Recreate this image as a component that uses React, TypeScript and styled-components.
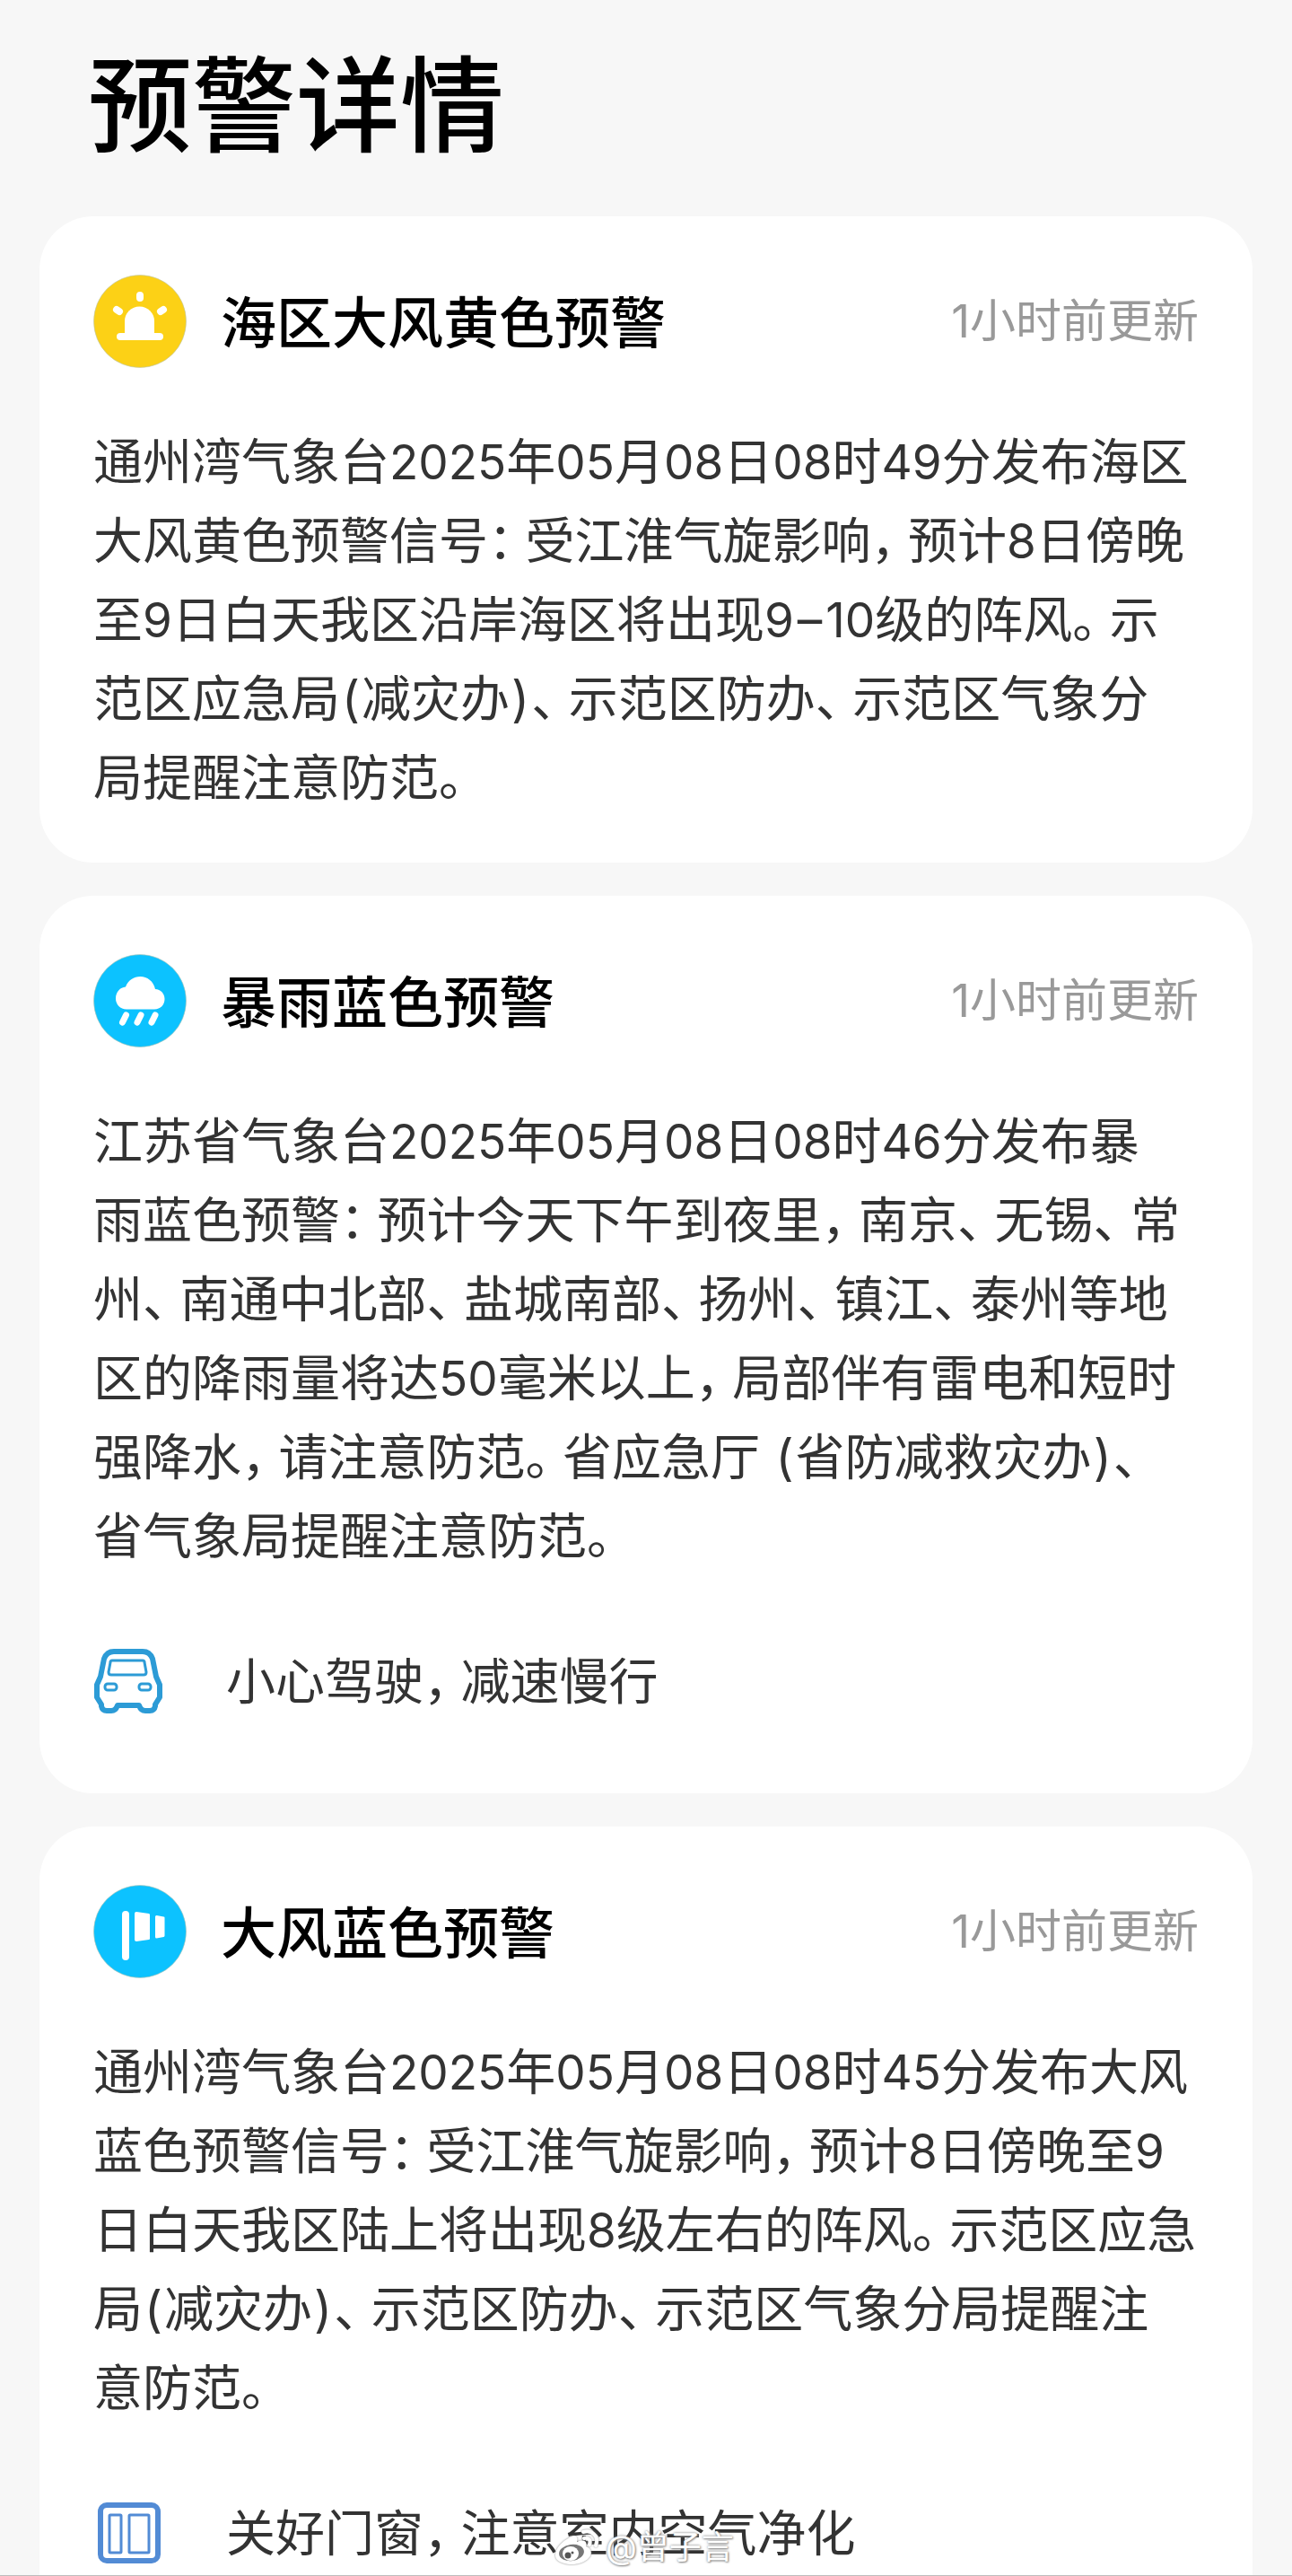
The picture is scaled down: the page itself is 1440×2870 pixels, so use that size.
import React from "react";
import styled, { createGlobalStyle } from "styled-components";

const GlobalStyle = createGlobalStyle`
  * { box-sizing: border-box; }
  body {
    margin: 0;
    background: #f7f7f7;
    font-family: Inter, "Noto Sans CJK SC", sans-serif;
    color: #333333;
  }
  h1, h2, p { margin: 0; }
`;

const Page = styled.main`
  position: relative;
  height: 100vh;
  overflow: hidden;
  padding: 0 44px;
  border-bottom: 1px solid #bdbdbd;
`;

const PageTitle = styled.h1`
  padding: 38px 54px 43px;
  font-size: 116px;
  line-height: 160px;
  font-weight: 500;
  color: #000000;
`;

const CardList = styled.div`
  display: flex;
  flex-direction: column;
  gap: 37px;
`;

const Card = styled.article`
  padding: 65px 60px 51px;
  border-radius: 60px;
  background: #ffffff;
`;

const CardHeader = styled.header`
  display: flex;
  align-items: center;
  gap: 38px;
  height: 104px;
  margin-bottom: 60px;
`;

const CardTitle = styled.h2`
  flex: 1;
  padding-top: 6px;
  font-size: 62px;
  line-height: 88px;
  font-weight: 500;
  color: #000000;
`;

const Updated = styled.time`
  font-size: 51px;
  line-height: 72px;
  color: #999999;
`;

const Body = styled.p`
  font-size: 55px;
  line-height: 88px;
  white-space: pre-line;
`;

const Mark = styled.span`
  margin-right: 14px;
  font-feature-settings: "halt";
`;

const Paren = styled.span`
  margin: 0 2px;
`;

const Dash = styled.span`
  margin: 0 4px;
`;

const Num = styled.span`
  font-size: 53px;
  line-height: 1;
`;

const Tip = styled.div`
  display: flex;
  align-items: center;
  gap: 68px;
  margin: 74px 0 30px;
  font-size: 55px;
  line-height: 88px;
`;

const Watermark = styled.div`
  position: absolute;
  left: 616px;
  bottom: 7px;
  display: flex;
  align-items: center;
  gap: 5px;
  font-size: 36px;
  line-height: 48px;
  color: #ffffff;
  text-shadow: 0 0 3px #777777, 1px 1px 2px #999999;
`;

const LogoSvg = styled.svg`
  filter: drop-shadow(0 0 1px #888888);
`;

const badgeColors = { siren: "#fcd116", rain: "#0cc2ff", wind: "#0cc2ff" };
type BadgeKind = keyof typeof badgeColors;

function Badge({ kind }: { kind: BadgeKind }) {
  return (
    <svg width="104" height="104" viewBox="0 0 104 104" aria-hidden="true">
      <circle cx="52" cy="52" r="51.5" fill={badgeColors[kind]} stroke="#b9c4b0" strokeOpacity="0.6" />
      {kind === "siren" && (
        <g fill="#fff" stroke="#fff" strokeLinecap="round">
          <path d="M35 66V52a16 16 0 0 1 33 0v14z" stroke="none" />
          <path d="M30 69h44" strokeWidth="8" />
          <path d="M52 23v3M26 39l3 2M78 39l-3 2" strokeWidth="8" />
        </g>
      )}
      {kind === "rain" && (
        <g fill="#fff" stroke="#fff" strokeLinecap="round">
          <path d="M37 61.500C30 61.500 25 56 25 49.500C25 42 30 37 36 36.500C39 29 45 25 52.500 25C60 25 67 30 69 39C75 39 79.500 44 79.500 50C79.500 56.500 75 61.500 68 61.500Z" stroke="none" />
          <path d="M36.500 68l-4 8M53 68l-4 8M69 68l-4 8" strokeWidth="7" />
        </g>
      )}
      {kind === "wind" && (
        <g fill="#fff">
          <rect x="32" y="29" width="8" height="55" rx="4" />
          <path d="M46 32q0-2 2-2l14 2q1 0 1 1.500v26q0 1.500-1 1.500l-14 2q-2 0-2-2zM69 35.500q0-1.500 1.500-1.500l8 1.500q1 0 1 1v20q0 1-1 1.500l-8 1.500q-1.500 0-1.500-1.500z" />
        </g>
      )}
    </svg>
  );
}

function CarIcon() {
  return (
    <svg width="80" height="76" viewBox="0 0 80 76" fill="none" stroke="#2c9bd6" aria-hidden="true">
      <path d="M23 5H55Q63 5 66 13L70 33L74 42V56L69 64V66Q68 71 63 71H58Q53 71 51 65H27Q25 71 20 71H15Q10 71 9 66V64L4 56V42L8 33L12 13Q15 5 23 5Z" strokeWidth="6" strokeLinejoin="round" />
      <path d="M21 15h34q2 0 2 2l2 11q0 3-3 3H20q-3 0-3-3l2-11q0-2 2-2z" strokeWidth="3" />
      <rect x="13" y="41" width="13" height="7" rx="3" strokeWidth="3" />
      <rect x="51" y="41" width="13" height="7" rx="3" strokeWidth="3" />
    </svg>
  );
}

function WindowIcon() {
  return (
    <svg width="80" height="76" viewBox="0 0 80 76" fill="none" stroke="#528bd5" aria-hidden="true">
      <rect x="8" y="7" width="64" height="62" rx="7" strokeWidth="6" />
      <rect x="18" y="18" width="13" height="42" rx="1" strokeWidth="3" />
      <rect x="40" y="18" width="22" height="42" rx="1" strokeWidth="3" />
    </svg>
  );
}

function WeiboLogo() {
  return (
    <LogoSvg width="54" height="44" viewBox="0 0 54 44" fill="none" aria-hidden="true">
      <path d="M19 11C25 7 29 10 27 16C34 13 39 15 37 21C43 23 45 29 40 34C32 43 13 43 5 36C-1 29 7 17 19 11Z" fill="#fff" />
      <ellipse cx="21" cy="28" rx="14" ry="9" fill="#777" transform="rotate(-8 21 28)" />
      <ellipse cx="20" cy="29" rx="9" ry="8" fill="#fff" />
      <circle cx="17" cy="31" r="3.500" fill="#555" />
      <circle cx="22" cy="28" r="1.500" fill="#555" />
      <path d="M34 5C44 2 52 10 48 20M35 12C40 11 43 14 41 19" stroke="#fff" strokeWidth="4" strokeLinecap="round" />
    </LogoSvg>
  );
}

/* Full-width punctuation takes a narrower advance than the characters around it,
   and Latin digits are set a little smaller than the Chinese text. */
function Text({ children }: { children: string }) {
  return (
    <>
      {children.split(/([，。：、]|[()]|–|\d+)/).map((part, i) => {
        if (i % 2 === 0) return part;
        if (/[，。：、]/.test(part)) return <Mark key={i}>{part}</Mark>;
        if (/[()]/.test(part)) return <Paren key={i}>{part}</Paren>;
        if (part === "–") return <Dash key={i}>{part}</Dash>;
        return <Num key={i}>{part}</Num>;
      })}
    </>
  );
}

interface Alert {
  kind: BadgeKind;
  title: string;
  body: string;
  tip?: { icon: React.ReactNode; text: string };
}

const alerts: Alert[] = [
  {
    kind: "siren",
    title: "海区大风黄色预警",
    body:
      "通州湾气象台2025年05月08日08时49分发布海区\n大风黄色预警信号：受江淮气旋影响，预计8日傍晚\n至9日白天我区沿岸海区将出现9–10级的阵风。示\n范区应急局(减灾办)、示范区防办、示范区气象分\n局提醒注意防范。",
  },
  {
    kind: "rain",
    title: "暴雨蓝色预警",
    body:
      "江苏省气象台2025年05月08日08时46分发布暴\n雨蓝色预警：预计今天下午到夜里，南京、无锡、常\n州、南通中北部、盐城南部、扬州、镇江、泰州等地\n区的降雨量将达50毫米以上，局部伴有雷电和短时\n强降水，请注意防范。省应急厅 (省防减救灾办)、\n省气象局提醒注意防范。",
    tip: { icon: <CarIcon />, text: "小心驾驶，减速慢行" },
  },
  {
    kind: "wind",
    title: "大风蓝色预警",
    body:
      "通州湾气象台2025年05月08日08时45分发布大风\n蓝色预警信号：受江淮气旋影响，预计8日傍晚至9\n日白天我区陆上将出现8级左右的阵风。示范区应急\n局(减灾办)、示范区防办、示范区气象分局提醒注\n意防范。",
    tip: { icon: <WindowIcon />, text: "关好门窗，注意室内空气净化" },
  },
];

export default function App() {
  return (
    <Page lang="zh-CN">
      <GlobalStyle />
      <PageTitle>预警详情</PageTitle>
      <CardList>
        {alerts.map((alert) => (
          <Card key={alert.title}>
            <CardHeader>
              <Badge kind={alert.kind} />
              <CardTitle>{alert.title}</CardTitle>
              <Updated>1小时前更新</Updated>
            </CardHeader>
            <Body><Text>{alert.body}</Text></Body>
            {alert.tip && (
              <Tip>
                {alert.tip.icon}
                <span><Text>{alert.tip.text}</Text></span>
              </Tip>
            )}
          </Card>
        ))}
      </CardList>
      <Watermark><WeiboLogo /><span>@曾子言</span></Watermark>
    </Page>
  );
}
